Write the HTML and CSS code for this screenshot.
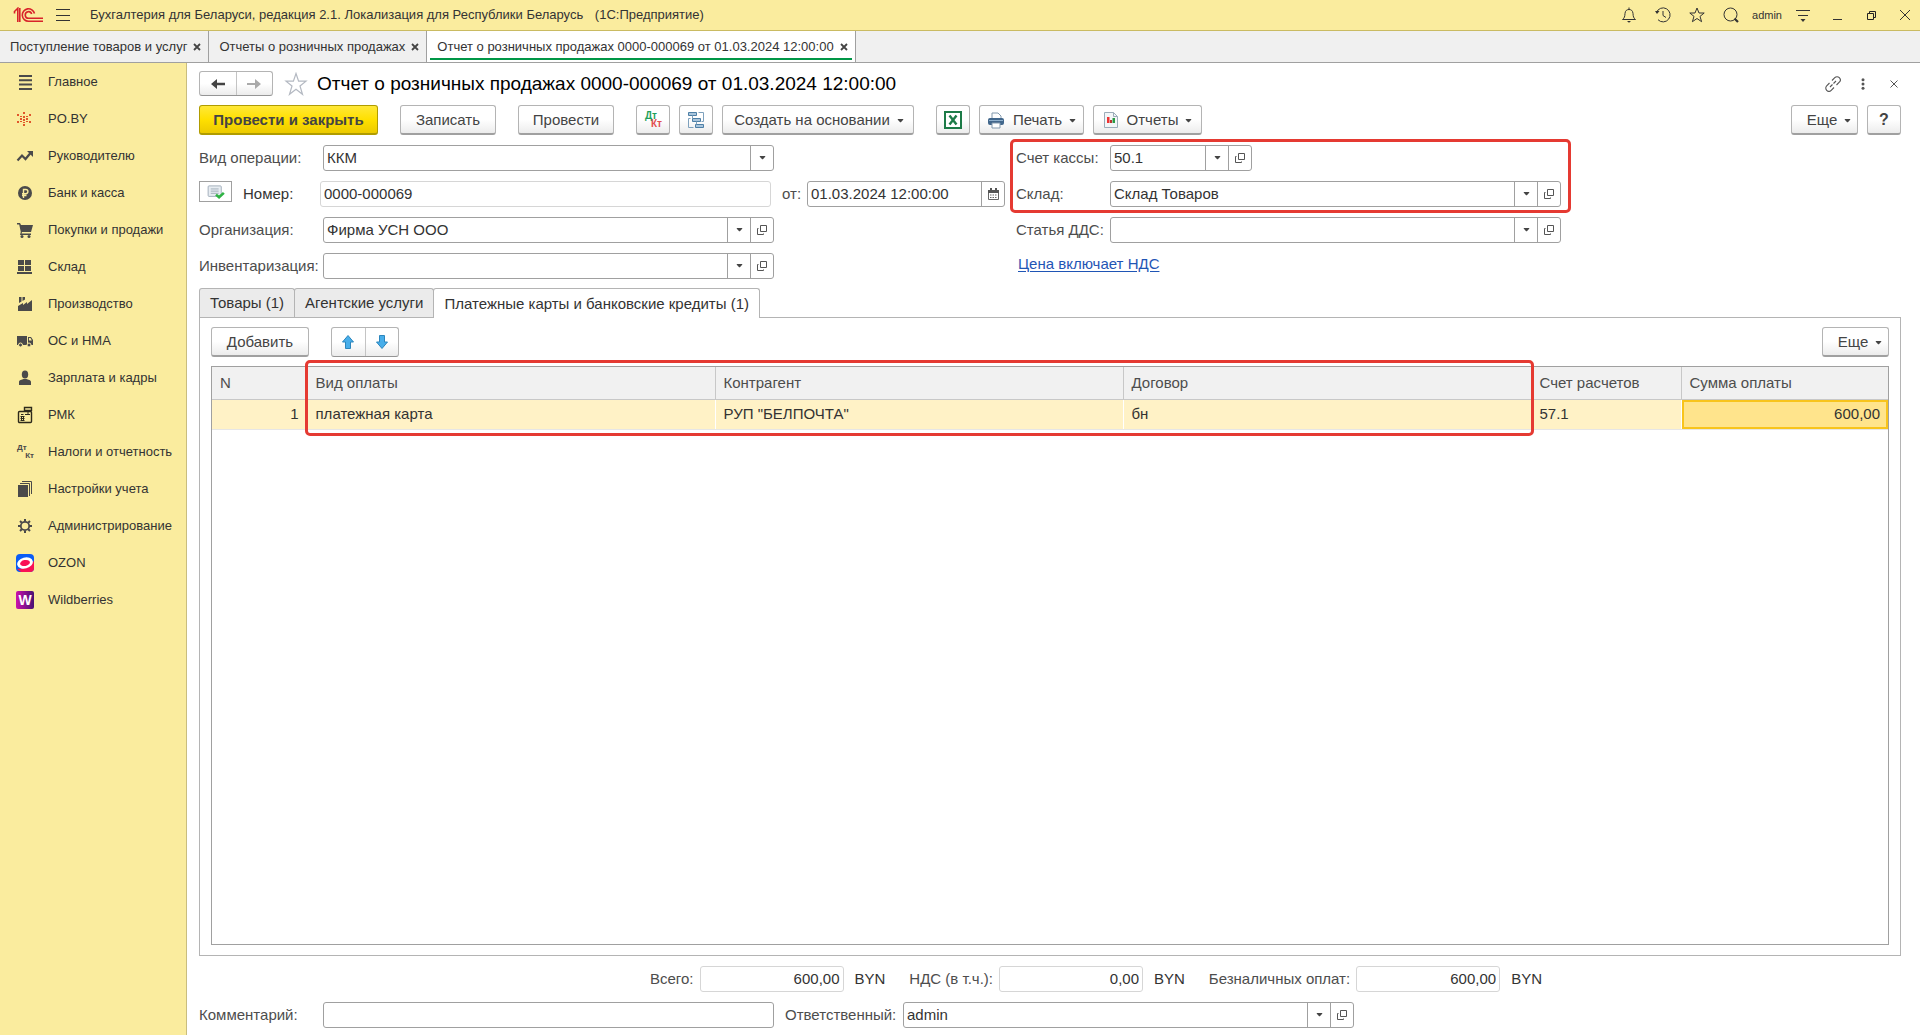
FILE: index.html
```html
<!DOCTYPE html>
<html lang="ru">
<head>
<meta charset="utf-8">
<title>Отчет о розничных продажах 0000-000069 от 01.03.2024 12:00:00</title>
<link rel="stylesheet" href="styles.css">
</head>
<body>
<svg class="sprite" aria-hidden="true">
  <symbol id="i-down" viewBox="0 0 7 4"><path d="M.8 0h5.400v.8L3.900 3.200h-.8L.8.8z" fill="currentColor"/></symbol>
  <symbol id="i-open" viewBox="0 0 12 12"><path d="M4.500 1.500h6v6h-6zM2.500 4.500h-1v6h6v-1" fill="none" stroke="#555"/></symbol>
  <symbol id="i-x" viewBox="0 0 8 8"><path d="M1 1l6 6M7 1L1 7" fill="none" stroke="#444" stroke-width="1.800"/></symbol>
</svg>

<header class="titlebar">
  <svg class="logo" width="30" height="16" viewBox="0 0 30 16" fill="none" stroke="#d8232a" stroke-width="1.600"><path d="M1 5L4.800 1.300V15M1.500 6.500V5M6.800 1v14"/><path d="M21.500 6.500A6.200 6.200 0 1 0 15.500 14.200H30"/><path d="M18.700 7A3.300 3.300 0 1 0 15.500 11.300H30"/></svg>
  <button class="plain" aria-label="Меню"><svg width="14" height="12" viewBox="0 0 14 12" stroke="#333"><path d="M0 .5h14M0 6.500h14M0 11.500h14"/></svg></button>
  <div class="app-name">Бухгалтерия для Беларуси, редакция 2.1. Локализация для Республики Беларусь <span>(1С:Предприятие)</span></div>
  <div class="system">
    <button class="plain" aria-label="Уведомления"><svg width="16" height="16" viewBox="0 0 16 16" fill="none" stroke="#333"><path d="M1.500 12.500c2-1.500 2.300-3 2.500-6C4.200 3.500 6 2.500 8 2.500s3.800 1 4 4c.2 3 .5 4.500 2.500 6zM8 .5v2"/><path d="M6 14h4l-2 1.700z" fill="#333" stroke="none"/></svg></button>
    <button class="plain" aria-label="История"><svg width="16" height="16" viewBox="0 0 16 16" fill="none" stroke="#333"><path d="M1.500 5.500A7 7 0 1 1 3 12.700M8 4v4.500l3 2"/><path d="M0 4l4.500 0L2 7z" fill="#333" stroke="none"/></svg></button>
    <button class="plain" aria-label="Избранное"><svg width="16" height="16" viewBox="0 0 16 16" fill="none" stroke="#333"><path d="M8 1l2 5h5.200l-4.200 3.400 1.600 5.300L8 11.500l-4.600 3.200L5 9.400.8 6H6z"/></svg></button>
    <button class="plain" aria-label="Поиск"><svg width="16" height="16" viewBox="0 0 16 16" fill="none" stroke="#333"><circle cx="7.500" cy="7.500" r="6.500"/><path d="M11.500 11.500l3.500 3.500" stroke-width="2.200"/></svg></button>
    <a class="user" href="#">admin</a>
    <button class="plain" aria-label="Настройка"><svg width="16" height="16" viewBox="0 0 16 16" stroke="#333"><path d="M1 3.500h14M3 8.500h10"/><path d="M5.500 12h5L8 15z" fill="#333" stroke="none"/></svg></button>
    <button class="plain" aria-label="Свернуть"><svg width="16" height="16" viewBox="0 0 16 16" stroke="#333"><path d="M4 12.500h9"/></svg></button>
    <button class="plain" aria-label="Восстановить"><svg width="16" height="16" viewBox="0 0 16 16" fill="none" stroke="#222"><path d="M4.500 6.500h6v6h-6zM6.500 6.500v-2h6v6h-2"/></svg></button>
    <button class="plain" aria-label="Закрыть"><svg width="16" height="16" viewBox="0 0 16 16" stroke="#333"><path d="M3 3l10 10M13 3L3 13"/></svg></button>
  </div>
</header>

<nav class="windows">
  <div class="window-tab"><a href="#">Поступление товаров и услуг</a><button class="plain" aria-label="Закрыть"><svg width="8" height="8"><use href="#i-x"/></svg></button></div>
  <div class="window-tab"><a href="#">Отчеты о розничных продажах</a><button class="plain" aria-label="Закрыть"><svg width="8" height="8"><use href="#i-x"/></svg></button></div>
  <div class="window-tab current"><a href="#">Отчет о розничных продажах 0000-000069 от 01.03.2024 12:00:00</a><button class="plain" aria-label="Закрыть"><svg width="8" height="8"><use href="#i-x"/></svg></button></div>
</nav>

<div class="workspace">
  <nav class="sections">
    <a href="#"><svg viewBox="0 0 18 18"><path d="M3 3h13M3 7.300h13M3 11.600h13M3 15.900h13" stroke="#4a4a4a" stroke-width="2"/></svg>Главное</a>
    <a href="#"><svg viewBox="0 0 18 18" fill="#e0562b"><path d="M7 2h2v2H7zM7 6h2v2H7zM7 9h2v2H7zM7 12h2v1H7zM7 14h2v2H7zM1 4h2v2H1zM13 4h2v2h-2zM1 11h2v2H1zM13 11h2v2h-2zM4 6h2v1H4zM10 6h2v1h-2zM4 8h2v2H4zM10 8h2v2h-2zM4 11h2v1H4zM10 11h2v1h-2z"/></svg>PO.BY</a>
    <a href="#"><svg viewBox="0 0 18 18"><path d="M1.500 13.500L6 8.500l3.500 3.500 5-6" fill="none" stroke="#4a4a4a" stroke-width="2.200"/><path d="M11 4h6v6z" fill="#4a4a4a"/></svg>Руководителю</a>
    <a href="#"><svg viewBox="0 0 18 18"><circle cx="9" cy="9" r="7" fill="#4a4a4a"/><path d="M7.500 14V5.500h2.300a2 2 0 0 1 0 4.200H6M6 11.500h4.500" fill="none" stroke="#faec9e" stroke-width="1.400"/></svg>Банк и касса</a>
    <a href="#"><svg viewBox="0 0 18 18" fill="#4a4a4a"><path d="M1 2h3l1 2h12l-2 7H6l-.5 1.500H15V14H4l.8-3L3.200 3.500H1z"/><circle cx="6" cy="15.500" r="1.500"/><circle cx="13" cy="15.500" r="1.500"/></svg>Покупки и продажи</a>
    <a href="#"><svg viewBox="0 0 18 18" fill="#4a4a4a"><path d="M2 2h6v5H2zM9 2h6v5H9zM2 8h6v5H2zM9 8h6v5H9zM1 14h15v2H1z"/></svg>Склад</a>
    <a href="#"><svg viewBox="0 0 18 18" fill="#4a4a4a"><path d="M2 16v-5l5-3v2l4-3v2l5-4v11zM3 2h2.500v4.500L3 8zM6.500 2H9v2.500L6.500 6z"/></svg>Производство</a>
    <a href="#"><svg viewBox="0 0 18 18" fill="#4a4a4a"><path d="M1 4h10v9H1zM12 5h3l2 3v5h-5z"/><path d="M13 6h1.500l1.300 2.500H13z" fill="#faec9e"/><circle cx="4.500" cy="13" r="2" stroke="#faec9e"/><circle cx="13" cy="13" r="2" stroke="#faec9e"/></svg>ОС и НМА</a>
    <a href="#"><svg viewBox="0 0 18 18" fill="#4a4a4a"><ellipse cx="9" cy="5.500" rx="3.200" ry="4"/><path d="M3 16v-3c0-2 3-2.500 4.500-3h3c1.500.5 4.500 1 4.500 3v3z"/></svg>Зарплата и кадры</a>
    <a href="#"><svg viewBox="0 0 18 18" fill="none" stroke="#2d2a1b"><rect x="2.500" y="5.500" width="13" height="11" rx="1" stroke-width="1.400"/><path d="M8.500 1.500h7v3h-7z" stroke-width="1.400"/><path d="M12 5v3M9 8.500h5M5 8.500h2.500M4.500 10.500h4M4.500 12.500h4M4.500 14.500h4M5.500 10v5M7.500 10v5"/></svg>РМК</a>
    <a href="#"><span class="dtkt"><i>Дт</i><i>Кт</i></span>Налоги и отчетность</a>
    <a href="#"><svg viewBox="0 0 18 18"><path d="M2 5h10v12H2z" fill="#4a4a4a"/><path d="M4 3.500h9.500V16M6 1.500h9.500V14" fill="none" stroke="#4a4a4a"/></svg>Настройки учета</a>
    <a href="#"><svg viewBox="0 0 18 18" fill="none" stroke="#4a4a4a"><circle cx="9" cy="9" r="4.200" stroke-width="1.800"/><path d="M9 2v2.500M9 13.500V16M2 9h2.500M13.500 9H16M4 4l1.800 1.800M12.200 12.200L14 14M4 14l1.800-1.800M12.200 5.800L14 4" stroke-width="2"/></svg>Администрирование</a>
    <a href="#"><svg viewBox="0 0 18 18"><rect width="18" height="18" rx="4" fill="#0a5cf5"/><path d="M1 15c6 0 12-3 17-8v7a4 4 0 0 1-4 4H5z" fill="#f91155"/><ellipse cx="9" cy="9" rx="8" ry="5.500" fill="#fff" transform="rotate(-15 9 9)"/><ellipse cx="9" cy="9" rx="5" ry="3" fill="#f91155" transform="rotate(-12 9 9)"/></svg>OZON</a>
    <a href="#"><span class="wb">W</span>Wildberries</a>
  </nav>

  <main class="document">
    <div class="heading">
      <div class="pair history">
        <button aria-label="Назад"><svg width="14" height="12" viewBox="0 0 14 12"><path d="M0 6l6-5v3.700h8v2.600H6V11z" fill="#444"/></svg></button>
        <button aria-label="Вперед"><svg width="14" height="12" viewBox="0 0 14 12"><path d="M14 6L8 1v4H0v2h8v4z" fill="#aaa"/></svg></button>
      </div>
      <button class="plain" aria-label="В избранное"><svg width="24" height="24" viewBox="0 0 24 24" fill="none" stroke="#b4b9c2" stroke-width="1.200"><path d="M12 1.500l2.600 7.700H22l-6 4.800 2.500 8.300L12 17.300l-6.500 5L8 14 2 9.200h7.400z"/></svg></button>
      <h1>Отчет о розничных продажах 0000-000069 от 01.03.2024 12:00:00</h1>
      <div class="heading-tools">
        <button class="plain" aria-label="Ссылка"><svg width="16" height="16" viewBox="0 0 16 16" fill="none" stroke="#555" stroke-width="1.100"><path d="M7 4.500l2.800-2.800a2.600 2.600 0 0 1 4.500 4.500L11.500 9M9 11.500l-2.800 2.800a2.600 2.600 0 0 1-4.500-4.500L4.500 7M5 11l2.500-2.500M8.500 7.500L11 5"/></svg></button>
        <button class="plain" aria-label="Действия"><svg width="4" height="12" viewBox="0 0 4 12" fill="#555"><circle cx="2" cy="1.700" r="1.500"/><circle cx="2" cy="6" r="1.500"/><circle cx="2" cy="10.300" r="1.500"/></svg></button>
        <button class="plain" aria-label="Закрыть"><svg width="8" height="8" viewBox="0 0 8 8" stroke="#555"><path d="M.5.5l7 7M7.500.5l-7 7"/></svg></button>
      </div>
    </div>

    <div class="commands">
      <button class="btn primary">Провести и закрыть</button>
      <button class="btn w-save">Записать</button>
      <button class="btn w-save">Провести</button>
      <div class="group">
        <button class="btn icon" aria-label="Дт Кт"><span class="dtkt color"><i>Дт</i><i>Кт</i></span></button>
        <button class="btn icon" aria-label="Структура подчиненности"><svg width="18" height="18" viewBox="0 0 18 18" fill="#a9c5dc" stroke="#4d7fa6"><path d="M1.500 1.500h8v3h-8zM5.500 7.500h8v3h-8zM8.500 13.500h8v3h-8z"/><path d="M5.500 4.500v3M9.500 10.500v3M11.500 1.500h5v9h-2M3.500 7.500h-2v9h5" fill="none" stroke="#7ea1bd"/></svg></button>
        <button class="btn w-create">Создать на основании<svg class="caret" width="7" height="4"><use href="#i-down"/></svg></button>
      </div>
      <div class="group">
        <button class="btn icon" aria-label="Excel"><svg width="18" height="18" viewBox="0 0 18 18"><path d="M1 1h16v16H1z" fill="#fff" stroke="#1d7b48" stroke-width="2"/><path d="M5.500 4.500l7 9M12.500 4.500l-7 9" stroke="#1d7b48" stroke-width="2.400"/></svg></button>
        <button class="btn w-print"><svg width="18" height="18" viewBox="0 0 18 18"><path d="M5 7V2h6l3 3v2" fill="#fff" stroke="#8299ad"/><rect x="1" y="7" width="16" height="7" rx="2" fill="#42678c"/><path d="M2 9.500h14" stroke="#8fb0cd"/><path d="M5 12h8v5H5z" fill="#fff" stroke="#8299ad"/></svg>Печать<svg class="caret" width="7" height="4"><use href="#i-down"/></svg></button>
        <button class="btn w-reports"><svg width="16" height="18" viewBox="0 0 16 18"><path d="M1.500 1.500h9l4 4v11h-13z" fill="#f3f6f8" stroke="#9cacb9"/><path d="M10.500 1.500v4h4" fill="none" stroke="#9cacb9"/><path d="M4 6h2.500v6H4z" fill="#e33"/><path d="M7 9h2v3H7z" fill="#b33"/><path d="M9.500 7H12v5H9.500z" fill="#2a9a44"/></svg>Отчеты<svg class="caret" width="7" height="4"><use href="#i-down"/></svg></button>
      </div>
      <div class="group end">
        <button class="btn w-more">Еще<svg class="caret" width="7" height="4"><use href="#i-down"/></svg></button>
        <button class="btn icon help">?</button>
      </div>
    </div>

    <form class="fields">
      <div class="column left">
        <div class="row"><label for="op">Вид операции:</label><div class="field"><input id="op" value="ККМ"><button type="button" aria-label="Выбрать"><svg width="7" height="4"><use href="#i-down"/></svg></button></div></div>
        <div class="row number-row">
          <button type="button" class="status" aria-label="Проведен"><svg width="18" height="14" viewBox="0 0 20 16"><rect x="1" y="1" width="15" height="12" rx="1" fill="#e8edf2" stroke="#9aa7b5"/><path d="M4 4.500h9M4 7h9M4 9.500h9" stroke="#9aa7b5"/><path d="M10 11l3.500 3L19 9" fill="none" stroke="#2fb344" stroke-width="3"/></svg></button>
          <label class="strong" for="num">Номер:</label>
          <div class="field quiet"><input id="num" value="0000-000069" readonly></div>
          <label for="date">от:</label>
          <div class="field date"><input id="date" value="01.03.2024 12:00:00"><button type="button" aria-label="Календарь"><svg width="11" height="12" viewBox="0 0 11 12"><path d="M.5 2.500h10v9H.5z" fill="#fff" stroke="#666"/><path d="M0 2h11v3H0zM2 0h2v2H2zM7 0h2v2H7z" fill="#555"/><path d="M2 7h7M2 9.500h7" stroke="#666" stroke-dasharray="1.500 1"/></svg></button></div>
        </div>
        <div class="row"><label for="org">Организация:</label><div class="field"><input id="org" value="Фирма УСН ООО"><button type="button" aria-label="Выбрать"><svg width="7" height="4"><use href="#i-down"/></svg></button><button type="button" aria-label="Открыть"><svg width="12" height="12"><use href="#i-open"/></svg></button></div></div>
        <div class="row"><label for="inv">Инвентаризация:</label><div class="field"><input id="inv"><button type="button" aria-label="Выбрать"><svg width="7" height="4"><use href="#i-down"/></svg></button><button type="button" aria-label="Открыть"><svg width="12" height="12"><use href="#i-open"/></svg></button></div></div>
      </div>
      <div class="column right">
        <div class="marked">
          <div class="row"><label for="cash">Счет кассы:</label><div class="field account"><input id="cash" value="50.1"><button type="button" aria-label="Выбрать"><svg width="7" height="4"><use href="#i-down"/></svg></button><button type="button" aria-label="Открыть"><svg width="12" height="12"><use href="#i-open"/></svg></button></div></div>
          <div class="row"><label for="store">Склад:</label><div class="field"><input id="store" value="Склад Товаров"><button type="button" aria-label="Выбрать"><svg width="7" height="4"><use href="#i-down"/></svg></button><button type="button" aria-label="Открыть"><svg width="12" height="12"><use href="#i-open"/></svg></button></div></div>
        </div>
        <div class="row"><label for="dds">Статья ДДС:</label><div class="field"><input id="dds"><button type="button" aria-label="Выбрать"><svg width="7" height="4"><use href="#i-down"/></svg></button><button type="button" aria-label="Открыть"><svg width="12" height="12"><use href="#i-open"/></svg></button></div></div>
        <a class="price-link" href="#">Цена включает НДС</a>
      </div>
    </form>

    <div class="tabs" role="tablist">
      <button role="tab">Товары (1)</button>
      <button role="tab">Агентские услуги</button>
      <button role="tab" class="selected" aria-selected="true">Платежные карты и банковские кредиты (1)</button>
    </div>
    <section class="panel">
      <div class="panel-tools">
        <button class="btn w-add">Добавить</button>
        <div class="pair move">
          <button aria-label="Вверх"><svg width="14" height="16" viewBox="0 0 14 16"><path d="M7 1.500L12.500 8H9.500v6.500h-5V8h-3z" fill="#48aeea" stroke="#2c86bd"/></svg></button>
          <button aria-label="Вниз"><svg width="14" height="16" viewBox="0 0 14 16"><path d="M7 14.500L1.500 8h3V1.500h5V8h3z" fill="#48aeea" stroke="#2c86bd"/></svg></button>
        </div>
        <button class="btn w-more end">Еще<svg class="caret" width="7" height="4"><use href="#i-down"/></svg></button>
      </div>
      <div class="grid">
        <table>
          <colgroup><col class="c-n"><col><col><col><col class="c-acc"><col class="c-sum"></colgroup>
          <thead><tr><th>N</th><th>Вид оплаты</th><th>Контрагент</th><th>Договор</th><th>Счет расчетов</th><th>Сумма оплаты</th></tr></thead>
          <tbody><tr><td class="num">1</td><td>платежная карта</td><td>РУП "БЕЛПОЧТА"</td><td>бн</td><td>57.1</td><td class="num active">600,00</td></tr></tbody>
        </table>
        <div class="grid-mark"></div>
      </div>
    </section>

    <div class="totals">
      <label for="t1">Всего:</label><div class="field quiet sum"><input id="t1" value="600,00" readonly></div><span>BYN</span>
      <label for="t2">НДС (в т.ч.):</label><div class="field quiet sum"><input id="t2" value="0,00" readonly></div><span>BYN</span>
      <label for="t3">Безналичных оплат:</label><div class="field quiet sum"><input id="t3" value="600,00" readonly></div><span>BYN</span>
    </div>
    <div class="footer">
      <label class="first" for="comment">Комментарий:</label><div class="field"><input id="comment"></div>
      <label class="second" for="resp">Ответственный:</label><div class="field"><input id="resp" value="admin"><button type="button" aria-label="Выбрать"><svg width="7" height="4"><use href="#i-down"/></svg></button><button type="button" aria-label="Открыть"><svg width="12" height="12"><use href="#i-open"/></svg></button></div>
    </div>
  </main>
</div>
</body>
</html>
```

FILE: styles.css
```css
* { box-sizing: border-box; }

body {
  margin: 0;
  min-height: 100vh;
  display: flex;
  flex-direction: column;
  background: #fff;
  color: #333;
  font: 15px/18px "Liberation Sans", Arial, sans-serif;
}

button, input { font: inherit; color: inherit; }
a { color: inherit; text-decoration: none; }
svg { display: block; flex: none; }
.sprite { position: absolute; width: 0; height: 0; }
.plain { border: 0; padding: 0; background: none; }

/* Title bar */
.titlebar {
  display: flex;
  align-items: center;
  height: 31px;
  padding: 0 7px 0 13px;
  background: #faec9e;
  border-bottom: 1px solid #cabb62;
  font-size: 13px;
}
.logo { margin-right: 13px; }
.app-name { margin-left: 20px; white-space: nowrap; }
.app-name span { margin-left: 8px; }
.system { display: flex; align-items: center; gap: 18px; margin-left: auto; }
.user { margin: 0 -5px; font-size: 11px; }

/* Open windows */
.windows {
  display: flex;
  height: 32px;
  background: #f0f0f0;
  border-bottom: 1px solid #a0a0a0;
  font-size: 13px;
}
.window-tab {
  display: flex;
  align-items: center;
  gap: 6px;
  padding: 0 7px 0 10px;
  border-right: 1px solid #a0a0a0;
  white-space: nowrap;
}
.window-tab.current {
  background: linear-gradient(#009646, #009646) 3px 27px / calc(100% - 6px) 2px no-repeat #fff;
}

/* Sections */
.workspace { flex: 1; display: flex; }
.sections {
  flex: none;
  width: 187px;
  background: #faec9e;
  border-right: 1px solid #c9bd7e;
  font-size: 13px;
}
.sections a {
  display: flex;
  align-items: center;
  gap: 14px;
  height: 37px;
  padding-left: 16px;
  white-space: nowrap;
}
.sections svg { width: 18px; height: 18px; }
.dtkt {
  display: flex;
  flex-direction: column;
  width: 18px;
  font-size: 8px;
  line-height: 8px;
  font-weight: bold;
  color: #4a4a4a;
}
.dtkt i { font-style: normal; }
.dtkt i:first-child { padding-left: 1px; text-align: left; }
.dtkt i:last-child { text-align: right; }
.dtkt.color { color: #1fa05a; font-size: 10px; }
.dtkt.color i:last-child { color: #e25050; }
.wb {
  width: 18px;
  height: 18px;
  border-radius: 2px;
  background: linear-gradient(90deg, #cb11ab, #481173);
  color: #fff;
  font-size: 14px;
  font-weight: bold;
  text-align: center;
}

/* Document */
.document {
  flex: 1;
  min-width: 0;
  display: flex;
  flex-direction: column;
  padding: 8px 19px 7px 12px;
}
.heading { display: flex; align-items: center; height: 25px; }
.heading h1 {
  margin: 0 0 0 9px;
  font-size: 19px;
  line-height: 24px;
  font-weight: normal;
  color: #000;
}
.heading-tools { display: flex; align-items: center; gap: 20px; margin-left: auto; padding-right: 3px; }
.heading-tools button:last-child { margin-left: 5px; }

.pair {
  display: flex;
  border: 1px solid #b4b4b4;
  border-bottom-color: #959595;
  border-radius: 3px;
  background: linear-gradient(#fff 50%, #ececec);
}
.pair button {
  flex: 1;
  display: flex;
  align-items: center;
  justify-content: center;
  padding: 0;
  border: 0;
  background: none;
}
.pair button + button { border-left: 1px solid #c4c4c4; }
.history { width: 74px; height: 25px; margin-right: 11px; }
.move { width: 68px; height: 30px; margin-left: 22px; }

.btn {
  display: flex;
  align-items: center;
  justify-content: center;
  height: 30px;
  padding: 0;
  border: 1px solid #b4b4b4;
  border-bottom: 2px solid #a0a0a0;
  border-radius: 3px;
  background: linear-gradient(#fff 50%, #ececec);
  color: #444;
  white-space: nowrap;
}
.btn svg:first-child { margin-right: 8px; }
.btn.icon { width: 34px; }
.btn.icon svg { margin: 0; }
.btn .caret { margin: 2px 0 0 7px; }
.primary {
  width: 179px;
  border-color: #b09c00;
  background: linear-gradient(#ffe838, #ffe000 50%, #ecca00);
  font-weight: bold;
}
.w-save { width: 96px; }
.w-add { width: 98px; }
.w-create { width: 192px; padding-left: 10px; }
.w-print { width: 105px; }
.w-reports { width: 109px; }
.w-more { width: 67px; padding-left: 17px; }
.help { font-weight: bold; font-size: 16px; }
.end { margin-left: auto; }

.commands { display: flex; gap: 22px; margin-top: 9px; }
.group { display: flex; gap: 9px; }

/* Form fields */
.fields { display: flex; margin-top: 10px; }
.left { width: 817px; flex: none; }
.column, .marked { display: flex; flex-direction: column; gap: 10px; }
.row, .totals, .footer { display: flex; align-items: center; height: 26px; }
label { color: #4d4d4d; white-space: nowrap; }
.left .row > label:first-child, .footer .first { width: 124px; }
.right .row > label { width: 94px; }
.field {
  display: flex;
  width: 451px;
  height: 26px;
  border: 1px solid #a0a0a0;
  border-radius: 3px;
  background: #fff;
}
.field input {
  flex: 1;
  min-width: 0;
  padding: 0 3px;
  border: 0;
  outline: 0;
  background: none;
}
.field button {
  display: flex;
  align-items: center;
  justify-content: center;
  width: 23px;
  padding: 0;
  border: 0;
  border-left: 1px solid #a0a0a0;
  background: none;
  color: #444;
}
.quiet { border-color: #d6d6d6; }
.account { width: 142px; }
.date { width: 198px; }
.number-row .strong { width: 77px; margin-left: 11px; color: #333; }
.number-row label[for="date"] { width: 25px; margin-left: 11px; }
.status {
  display: flex;
  align-items: center;
  justify-content: center;
  align-self: flex-start;
  width: 33px;
  height: 21px;
  padding: 0;
  border: 1px solid #a0a0a0;
  background: #fff;
}
.marked { position: relative; }
.marked::after {
  content: "";
  position: absolute;
  inset: -6px -10px -6px -6px;
  border: 3px solid #e53a32;
  border-radius: 5px;
  pointer-events: none;
}
.price-link {
  align-self: flex-start;
  margin: 2px 0 0 2px;
  color: #1f55b5;
  text-decoration: underline;
  text-underline-offset: 2px;
}

/* Tabs and table */
.tabs { display: flex; margin-top: 9px; }
.tabs button {
  height: 29px;
  margin-right: -1px;
  padding: 0 10px;
  border: 1px solid #b4b4b4;
  border-bottom: 0;
  border-radius: 3px 3px 0 0;
  background: #ebebeb;
  white-space: nowrap;
}
.tabs .selected { position: relative; height: 30px; margin-bottom: -1px; background: #fff; }
.panel {
  flex: 1;
  display: flex;
  flex-direction: column;
  gap: 9px;
  padding: 9px 11px 10px;
  border: 1px solid #b4b4b4;
}
.panel-tools { display: flex; }
.grid { position: relative; flex: 1; border: 1px solid #a0a0a0; }
table { width: 100%; border-collapse: collapse; table-layout: fixed; }
.c-n { width: 95px; }
.c-acc { width: 150px; }
.c-sum { width: 207px; }
th, td { padding: 0 8px; text-align: left; white-space: nowrap; }
th {
  height: 32px;
  border-bottom: 1px solid #c8c8c8;
  border-right: 1px solid #c8c8c8;
  background: #f1f1f1;
  color: #4d4d4d;
  font-weight: normal;
}
th:last-child { border-right: 0; }
td {
  height: 30px;
  border-right: 1px solid #fff;
  border-bottom: 1px solid #e6e6e6;
  background: #fff2c6;
}
td.num { text-align: right; }
td.active { background: #ffe48c; box-shadow: inset 0 0 0 2px #f8c41c; border-right: 0; }
.grid-mark {
  position: absolute;
  top: -7px;
  left: 93px;
  right: 354px;
  height: 76px;
  border: 3px solid #e53a32;
  border-radius: 5px;
  pointer-events: none;
}

/* Totals */
.totals { justify-content: center; margin-top: 10px; padding-left: 92px; }
.totals label { margin-right: 6px; }
.totals span { margin: 0 24px 0 11px; }
.totals span:last-child { margin-right: 0; }
.sum { width: 144px; }
.sum input { text-align: right; }
.footer { margin-top: 10px; }
.footer .second { width: 118px; margin-left: 11px; }
```
